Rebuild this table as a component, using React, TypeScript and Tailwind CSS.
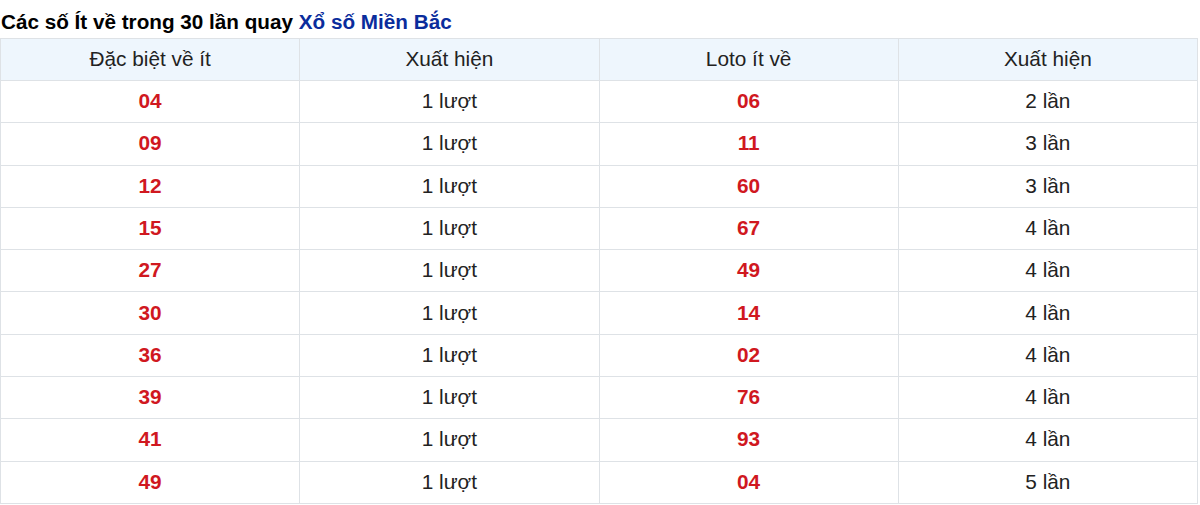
import React from "react";

const rows: [string, string, string, string][] = [
  ["04", "1 lượt", "06", "2 lần"],
  ["09", "1 lượt", "11", "3 lần"],
  ["12", "1 lượt", "60", "3 lần"],
  ["15", "1 lượt", "67", "4 lần"],
  ["27", "1 lượt", "49", "4 lần"],
  ["30", "1 lượt", "14", "4 lần"],
  ["36", "1 lượt", "02", "4 lần"],
  ["39", "1 lượt", "76", "4 lần"],
  ["41", "1 lượt", "93", "4 lần"],
  ["49", "1 lượt", "04", "5 lần"],
];

export default function App() {
  return (
    <div className="w-[1200px] h-[505px] bg-white overflow-hidden" style={{ fontFamily: '"Liberation Sans", Arial, sans-serif' }}>
      <h3 className="h-[38px] pt-[10px] pl-[1px] text-[20.7px] leading-[24px] font-bold text-black">
        Các số Ít về trong 30 lần quay <span className="text-[#0a2c9c]">Xổ số Miền Bắc</span>
      </h3>
      <table className="w-[1198px] border-collapse table-fixed text-[20.8px] text-[#222]">
        <thead>
          <tr className="h-[42px] bg-[#eef6fd]">
            {["Đặc biệt về ít", "Xuất hiện", "Loto ít về", "Xuất hiện"].map((h, i) => (
              <th key={i} className="border border-[#dee2e6] font-normal text-center p-0 pb-[2px]">{h}</th>
            ))}
          </tr>
        </thead>
        <tbody>
          {rows.map((r, i) => (
            <tr key={i} className="h-[42.3px]">
              <td className="border border-[#dee2e6] text-center p-0 pb-[2px] font-bold text-[#d0181f]">{r[0]}</td>
              <td className="border border-[#dee2e6] text-center p-0 pb-[2px]">{r[1]}</td>
              <td className="border border-[#dee2e6] text-center p-0 pb-[2px] font-bold text-[#d0181f]">{r[2]}</td>
              <td className="border border-[#dee2e6] text-center p-0 pb-[2px]">{r[3]}</td>
            </tr>
          ))}
        </tbody>
      </table>
    </div>
  );
}
